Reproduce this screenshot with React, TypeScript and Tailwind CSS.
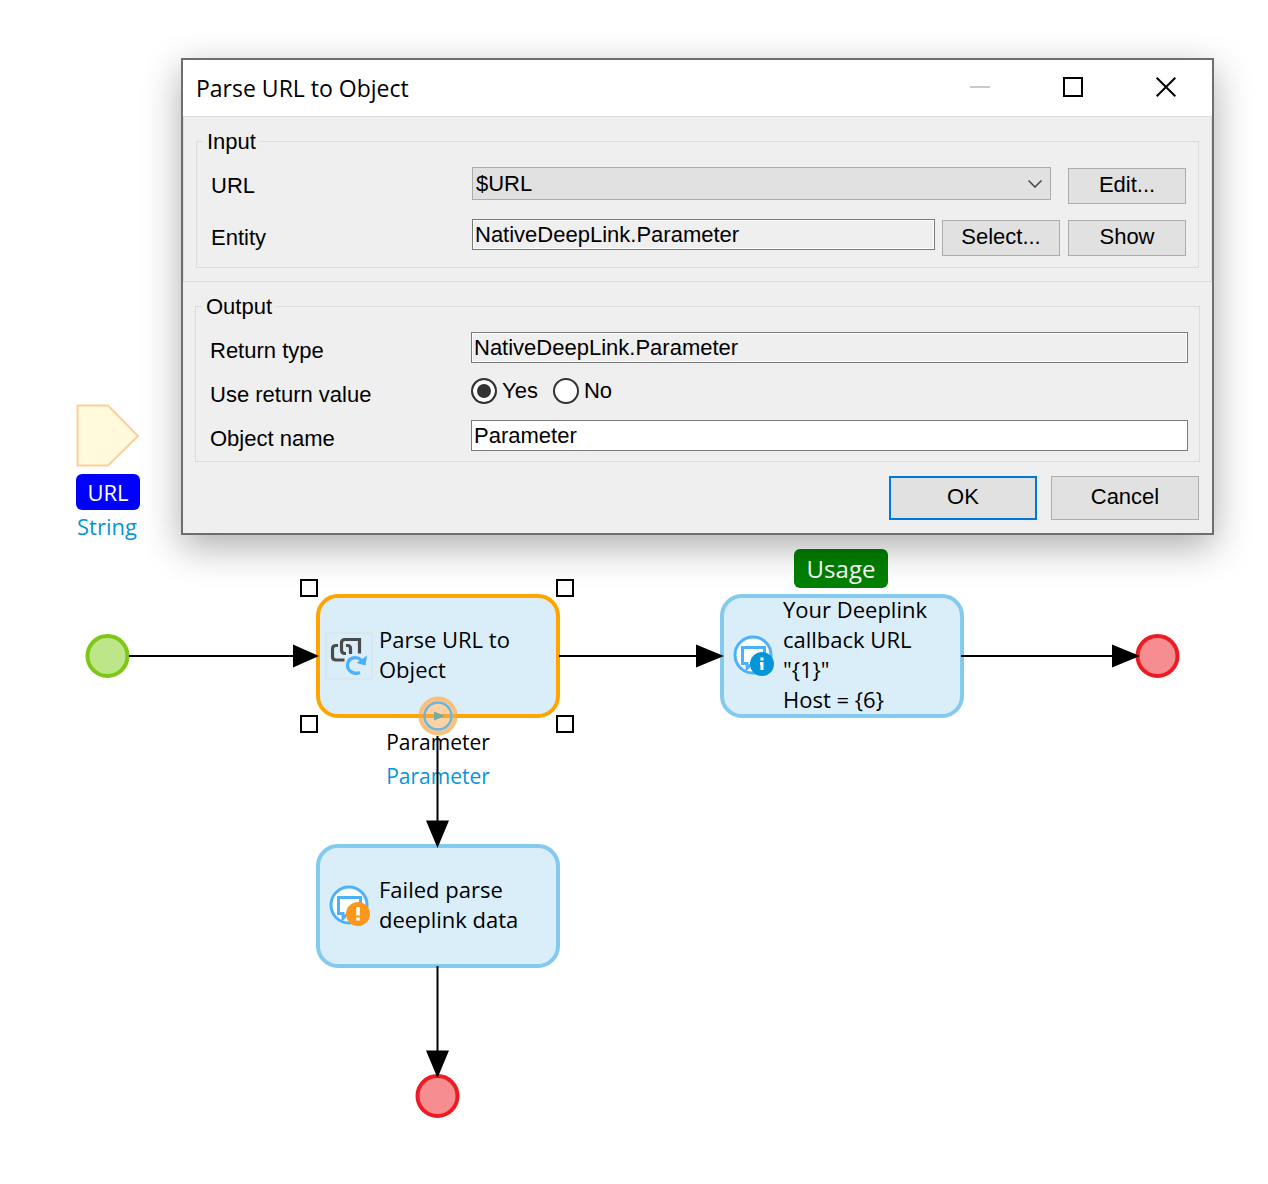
import type { ReactNode } from 'react';

function ActivityNode({ place, border, icon, children }: { place: string; border: string; icon: ReactNode; children: ReactNode }) {
  return (
    <div className={`absolute flex h-[124px] w-[244px] items-center rounded-[22px] border-4 bg-[#daeefa] pl-2 ${border} ${place}`}>
      <div className="w-[51px] shrink-0">{icon}</div>
      <div className="pb-1 text-[22px] leading-[30px] whitespace-nowrap">{children}</div>
    </div>
  );
}

function MessageIcon({ kind }: { kind: 'info' | 'warning' }) {
  const color = kind === 'info' ? '#0595db' : '#fb981c';
  return (
    <svg width="44" height="44" viewBox="0 0 44 44" fill="none">
      <circle cx="21" cy="21" r="18" fill="#fff" stroke="#4db1fa" strokeWidth="3" />
      <path d="M10.500 13.500h22v16H20l-5 5v-5h-4.500z" stroke="#4db1fa" strokeWidth="3" />
      <circle cx="30" cy="30" r="12" fill={color} />
      {kind === 'info' ? (
        <path d="M30 23.500v3M28 29.500h2M30 28v8" stroke="#fff" strokeWidth="3" />
      ) : (
        <path d="M30 23v8.500M30 33.500v3" stroke="#fff" strokeWidth="3.500" />
      )}
    </svg>
  );
}

function ParseIcon() {
  return (
    <svg width="48" height="48" viewBox="0 0 48 48" fill="none" className="-ml-[3px]">
      <rect x="1" y="1" width="46" height="46" stroke="#dbe7ef" strokeWidth="2" />
      <path d="M13 13.500H11Q7.500 13.500 7.500 17V24.500Q7.500 28 11 28H19.500" stroke="#4b4b4b" strokeWidth="3.200" />
      <path d="M21 21.500H20Q16.500 21.500 16.500 18V11Q16.500 7.500 20 7.500H34.500V21.500" stroke="#4b4b4b" strokeWidth="3.200" />
      <path d="M21 13.500H22.500Q25.500 13.500 25.500 16.500V22" stroke="#4b4b4b" strokeWidth="3.200" />
      <path d="M35 40.500C29 43 22.500 39 22.500 33.500C22.500 26 31 23 36.500 28.500" stroke="#4db1fa" strokeWidth="3.200" />
      <path d="M42 23.500L40.500 33.500L31.500 31Z" fill="#4db1fa" />
    </svg>
  );
}

function Handle({ place }: { place: string }) {
  return <div className={`absolute size-[18px] border-2 border-black bg-white ${place}`} />;
}

function Flow() {
  return (
    <div className="relative min-h-[1184px] w-full font-['Open_Sans',sans-serif] text-black">
      <svg width="64" height="64" viewBox="0 0 64 64" className="absolute top-[404px] left-[76px]">
        <path d="M1.500 1.500H32L62 32L32 61.500H1.500Z" fill="#fffadb" stroke="#fbcf9b" strokeWidth="2" />
      </svg>
      <div className="absolute top-[474px] left-[76px] flex h-9 w-16 items-center justify-center rounded-md bg-[#0000ff] text-[22px] text-white">URL</div>
      <div className="absolute top-[511px] left-[47px] w-[120px] text-center text-[22px] leading-[30px] text-[#0595db]">String</div>

      <ActivityNode place="top-[594px] left-[316px]" border="border-[#ffa500]" icon={<ParseIcon />}>
        Parse URL to<br />Object
      </ActivityNode>
      <ActivityNode place="top-[594px] left-[720px]" border="border-[#82caee]" icon={<MessageIcon kind="info" />}>
        Your Deeplink<br />callback URL<br />"{'{1}'}"<br />Host = {'{6}'}
      </ActivityNode>
      <ActivityNode place="top-[844px] left-[316px]" border="border-[#82caee]" icon={<MessageIcon kind="warning" />}>
        Failed parse<br />deeplink data
      </ActivityNode>

      <Handle place="top-[579px] left-[300px]" />
      <Handle place="top-[579px] left-[556px]" />
      <Handle place="top-[715px] left-[300px]" />
      <Handle place="top-[715px] left-[556px]" />

      <div className="absolute top-[549px] left-[794px] flex h-[39px] w-[94px] items-center justify-center rounded-md bg-[#008000] text-2xl text-white">Usage</div>

      <div className="absolute top-[727px] left-[358px] w-40 text-center text-[21px] leading-[30px]">Parameter</div>
      <div className="absolute top-[761px] left-[358px] w-40 text-center text-[21px] leading-[30px] text-[#0595db]">Parameter</div>

      <svg width="1268" height="1184" viewBox="0 0 1268 1184" fill="none" className="absolute top-0 left-0">
        <circle cx="107.500" cy="656" r="20" fill="#bce687" stroke="#7dc814" strokeWidth="4" />
        <circle cx="1157.500" cy="656" r="20" fill="#f68d91" stroke="#ed1c24" strokeWidth="4" />
        <circle cx="437.500" cy="1096" r="20" fill="#f68d91" stroke="#ed1c24" strokeWidth="4" />
        <circle cx="438" cy="716" r="17.500" fill="#fbd2a6" stroke="#fbbf7c" strokeWidth="4" />
        <path d="M418 716h40" stroke="#fca728" strokeWidth="4" />
        <circle cx="438" cy="716" r="13.500" stroke="#6cb5dc" strokeWidth="2.500" />
        <path d="M434 711.500L445 716L434 720.500Z" fill="#75ada5" />
        <path d="M129 656H295M559 656H698M961 656H1114M437.500 736V822M437.500 966V1052" stroke="#000" strokeWidth="2" />
        <path d="M293 644.500L319 656L293 667.500ZM696 644.500L724 656L696 667.500ZM1112 644.500L1140 656L1112 667.500ZM426 820.500H449L437.500 848ZM426 1050.500H449L437.500 1078Z" fill="#000" />
      </svg>
    </div>
  );
}

const smallButton = 'h-9 w-[118px] shrink-0 self-end border border-[#adadad] bg-[#e1e1e1] pb-0.5';
const field = 'h-[31px] min-w-0 flex-1 self-start border border-[#7a7a7a] px-0.5 outline-none';
const windowButton = 'flex h-full w-[93px] items-center justify-center pb-0.5';
const radio = 'size-[26px] appearance-none rounded-full border-2 border-[#333] bg-white checked:bg-[#333] checked:shadow-[inset_0_0_0_4px_#fff]';

function Row({ label, id, children }: { label: string; id: string; children: ReactNode }) {
  return (
    <div className="flex h-[37px] items-center">
      <label htmlFor={id} className="w-[261px] shrink-0">{label}</label>
      {children}
    </div>
  );
}

function ParseDialog() {
  return (
    <div role="dialog" aria-label="Parse URL to Object" className="absolute top-[58px] right-[54px] left-[181px] border-2 border-[#6e6e6e] bg-[#efefef] font-['Liberation_Sans',Arial,sans-serif] text-[22px] leading-6 text-black shadow-[0_12px_36px_rgba(0,0,0,0.32)]">
      <header className="flex h-14 items-center bg-white">
        <h1 className="flex-1 pl-[13px] font-['Open_Sans',sans-serif] text-[23px]">Parse URL to Object</h1>
        <button aria-label="Minimize" className={windowButton}>
          <svg width="20" height="20"><path d="M0 10h20" stroke="#c9c9c9" strokeWidth="2" /></svg>
        </button>
        <button aria-label="Maximize" className={windowButton}>
          <svg width="20" height="20"><rect x="1" y="1" width="18" height="18" fill="none" stroke="#000" strokeWidth="2" /></svg>
        </button>
        <button aria-label="Close" className={windowButton}>
          <svg width="20" height="20"><path d="M.7.700l18.600 18.600M19.300.700L.7 19.300" stroke="#000" strokeWidth="2" /></svg>
        </button>
      </header>

      <section className="border border-[#dcdcdc] px-3 py-[13px]">
        <fieldset className="min-w-0 border border-[#dcdcdc] pr-3 pb-[11px] pl-3.5">
          <legend className="-ml-2 px-1 leading-[23px]">Input</legend>
          <div className="flex flex-col gap-[15px] pt-3.5">
            <Row label="URL" id="url">
              <div className="relative mr-[17px] h-[33px] min-w-0 flex-1 self-start">
                <select id="url" className="h-full w-full appearance-none border border-[#adadad] bg-[#e1e1e1] px-[3px] outline-none">
                  <option>$URL</option>
                </select>
                <svg width="14" height="8" fill="none" className="pointer-events-none absolute top-[13px] right-[9px]">
                  <path d="M.5.500L7 7L13.500.500" stroke="#444" strokeWidth="1.500" />
                </svg>
              </div>
              <button className={smallButton}>Edit...</button>
            </Row>
            <Row label="Entity" id="entity">
              <input id="entity" readOnly value="NativeDeepLink.Parameter" className={`${field} mr-[7px] bg-[#efefef] shadow-[inset_0_0_0_1px_#fff]`} />
              <button className={`${smallButton} mr-2`}>Select...</button>
              <button className={smallButton}>Show</button>
            </Row>
          </div>
        </fieldset>
      </section>

      <section className="px-3 py-[13px]">
        <fieldset className="min-w-0 border border-[#dcdcdc] pr-[11px] pb-1 pl-3.5">
          <legend className="-ml-2 px-1 leading-[23px]">Output</legend>
          <div className="flex flex-col gap-[7px] pt-3.5">
            <Row label="Return type" id="return-type">
              <input id="return-type" readOnly value="NativeDeepLink.Parameter" className={`${field} bg-[#efefef] shadow-[inset_0_0_0_1px_#fff]`} />
            </Row>
            <Row label="Use return value" id="use-yes">
              <div className="flex h-[30px] items-center gap-[15px] self-start">
                <label className="flex items-center gap-[5px]">
                  <input id="use-yes" type="radio" name="use-return" defaultChecked className={radio} />
                  Yes
                </label>
                <label className="flex items-center gap-[5px]">
                  <input type="radio" name="use-return" className={radio} />
                  No
                </label>
              </div>
            </Row>
            <Row label="Object name" id="object-name">
              <input id="object-name" defaultValue="Parameter" className={`${field} bg-white`} />
            </Row>
          </div>
        </fieldset>
        <footer className="mt-3.5 flex justify-end gap-3.5 pr-px">
          <button className="h-11 w-[148px] border-2 border-[#0078d7] bg-[#e1e1e1] pb-0.5">OK</button>
          <button className="h-11 w-[148px] border border-[#adadad] bg-[#e1e1e1] pb-0.5">Cancel</button>
        </footer>
      </section>
    </div>
  );
}

export default function App() {
  return (
    <main className="relative overflow-hidden bg-white">
      <Flow />
      <ParseDialog />
    </main>
  );
}
